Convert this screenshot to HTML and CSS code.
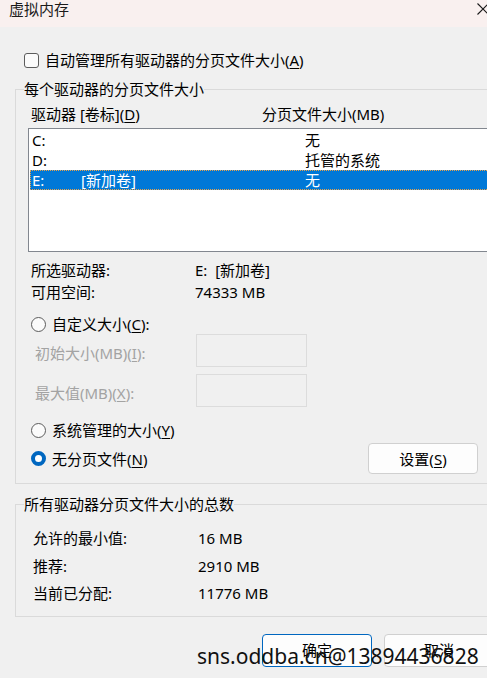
FILE: index.html
```html
<!DOCTYPE html>
<html lang="zh-CN">
<head>
<meta charset="utf-8">
<title>虚拟内存</title>
<link rel="stylesheet" href="styles.css">
</head>
<body>
<div class="window">
  <div class="titlebar">
    <span class="title">虚拟内存</span>
    <svg class="close" width="12" height="12" viewBox="0 0 12 12"><path d="M0.5 0.5 L11.5 11.5 M11.5 0.5 L0.5 11.5" stroke="#1a1a1a" stroke-width="1.1" fill="none"/></svg>
  </div>
  <div class="content">
    <div class="check-row">
      <span class="checkbox"></span>
      <span>自动管理所有驱动器的分页文件大小(<u>A</u>)</span>
    </div>

    <fieldset class="group group-drives">
      <legend>每个驱动器的分页文件大小</legend>
      <div class="list-head">
        <span>驱动器 [卷标](<u>D</u>)</span>
        <span>分页文件大小(MB)</span>
      </div>
      <div class="listbox">
        <div class="list-row"><span>C:</span><span></span><span>无</span></div>
        <div class="list-row"><span>D:</span><span></span><span>托管的系统</span></div>
        <div class="list-row selected"><span>E:</span><span>[新加卷]</span><span>无</span></div>
      </div>
      <div class="info">
        <span>所选驱动器:</span><span>E:&nbsp;&nbsp;[新加卷]</span>
        <span>可用空间:</span><span>74333 MB</span>
      </div>
      <div class="radio-row first">
        <span class="radio"></span><span>自定义大小(<u>C</u>):</span>
      </div>
      <div class="field-row">
        <span class="field-label">初始大小(MB)(<u>I</u>):</span><span class="input"></span>
      </div>
      <div class="field-row second">
        <span class="field-label">最大值(MB)(<u>X</u>):</span><span class="input"></span>
      </div>
      <div class="radio-row system">
        <span class="radio"></span><span>系统管理的大小(<u>Y</u>)</span>
      </div>
      <div class="radio-set-row">
        <div class="radio-row inline">
          <span class="radio checked"></span><span>无分页文件(<u>N</u>)</span>
        </div>
        <button class="btn">设置(<u>S</u>)</button>
      </div>
    </fieldset>

    <fieldset class="group group-total">
      <legend>所有驱动器分页文件大小的总数</legend>
      <div class="totals">
        <span>允许的最小值:</span><span>16 MB</span>
        <span>推荐:</span><span>2910 MB</span>
        <span>当前已分配:</span><span>11776 MB</span>
      </div>
    </fieldset>

    <div class="actions">
      <button class="btn btn-primary">确定</button>
      <button class="btn">取消</button>
    </div>
  </div>
  <div class="watermark">sns.oddba.cn@13894436828</div>
</div>
</body>
</html>
```

FILE: styles.css
```css
html, body {
  margin: 0;
  padding: 0;
}
body {
  width: 487px;
  height: 678px;
  overflow: hidden;
  background: #f0f0f0;
  font-family: "Noto Sans", "Noto Sans CJK SC", sans-serif;
  font-size: 15px;
  color: #000;
}
.window {
  position: relative;
  width: 487px;
  height: 678px;
  overflow: hidden;
}
u {
  text-decoration: underline;
  text-underline-offset: 2px;
  text-decoration-thickness: 1px;
}

/* title bar */
.titlebar {
  height: 27px;
  background: #f9f0ef;
  display: flex;
  align-items: flex-start;
  padding-left: 9px;
}
.title {
  line-height: 18px;
  color: #1a1a1a;
}
.close {
  margin-left: auto;
  margin-right: -2px;
  margin-top: 3px;
}

/* checkbox */
.check-row {
  margin-top: 23px;
  height: 20px;
  line-height: 20px;
  display: flex;
  align-items: center;
  padding-left: 24px;
  gap: 6px;
}
.checkbox {
  width: 15px;
  height: 15px;
  box-sizing: border-box;
  border: 1px solid #5c5c5c;
  border-radius: 3px;
  background: #fbfbfb;
}

/* group boxes */
.group {
  margin: 0 0 0 15px;
  padding: 0;
  border: 1px solid #dadada;
  width: 490px;
  min-width: 0;
  box-sizing: border-box;
}
.group legend {
  padding: 0;
  margin-left: 8px;
  line-height: 20px;
}
.group-drives {
  margin-top: 9px;
  padding-bottom: 9px;
}
.group-total {
  margin-top: 10px;
  padding-bottom: 8px;
}

.list-head {
  margin-top: 5px;
  height: 20px;
  line-height: 20px;
  padding-left: 15px;
  display: grid;
  grid-template-columns: 231px auto;
}

.listbox {
  margin-top: 4px;
  margin-left: 12px;
  height: 124px;
  box-sizing: border-box;
  border: 1px solid #82878f;
  background: #fff;
  padding: 1px 0 0 1px;
}
.list-row {
  height: 20px;
  line-height: 20px;
  display: grid;
  grid-template-columns: 49px 224px auto;
  padding-left: 2px;
}
.list-row.selected {
  background: #0078d7;
  color: #fff;
  outline: 1px dotted #e9a24a;
  outline-offset: -1px;
}

.info {
  margin-top: 7px;
  padding-left: 15px;
  display: grid;
  grid-template-columns: 164px auto;
  grid-auto-rows: 22px;
  line-height: 22px;
}

/* radios */
.radio-row {
  height: 20px;
  line-height: 20px;
  display: flex;
  align-items: center;
  gap: 6px;
  padding-left: 15px;
}
.radio-row.first { margin-top: 11px; }
.radio-row.system { margin-top: 13px; }
.radio-row.inline { padding-left: 0; }
.radio {
  width: 15px;
  height: 15px;
  box-sizing: border-box;
  border: 1px solid #5c5c5c;
  border-radius: 50%;
  background: #fbfbfb;
}
.radio.checked {
  border: 4.5px solid #0067c0;
  background: #fff;
}

.field-row {
  height: 33px;
  padding-left: 19px;
  display: grid;
  grid-template-columns: 161px 111px;
  align-items: center;
}
.field-row.second { margin-top: 7px; }
.field-label {
  color: #a3a3a3;
  line-height: 20px;
  padding-top: 5px;
}
.input {
  height: 33px;
  box-sizing: border-box;
  border: 1px solid #dcdcdc;
  background: #f0f0f0;
}

.radio-set-row {
  margin-top: 3px;
  padding-left: 15px;
  display: grid;
  grid-template-columns: 337px 110px;
  align-items: center;
  height: 31px;
}

/* buttons */
.btn {
  font: inherit;
  color: #000;
  width: 110px;
  height: 31px;
  box-sizing: border-box;
  background: #fdfdfd;
  border: 1px solid #d0d0d0;
  border-radius: 4px;
  padding: 0;
  line-height: 20px;
}
.actions {
  margin-top: 17px;
  padding-left: 262px;
  display: flex;
  gap: 12px;
  width: 300px;
}
.actions .btn {
  height: 33px;
  flex: 0 0 110px;
}
.btn-primary {
  border-color: #0067c0;
}

/* totals */
.totals {
  margin-top: 11px;
  padding-left: 17px;
  display: grid;
  grid-template-columns: 165px auto;
  grid-auto-rows: 27.5px;
  line-height: 27.5px;
}

.watermark {
  position: absolute;
  left: 197px;
  top: 646px;
  font-family: "Noto Sans", sans-serif;
  font-size: 21px;
  line-height: 21px;
  color: #111;
  white-space: nowrap;
}
```
